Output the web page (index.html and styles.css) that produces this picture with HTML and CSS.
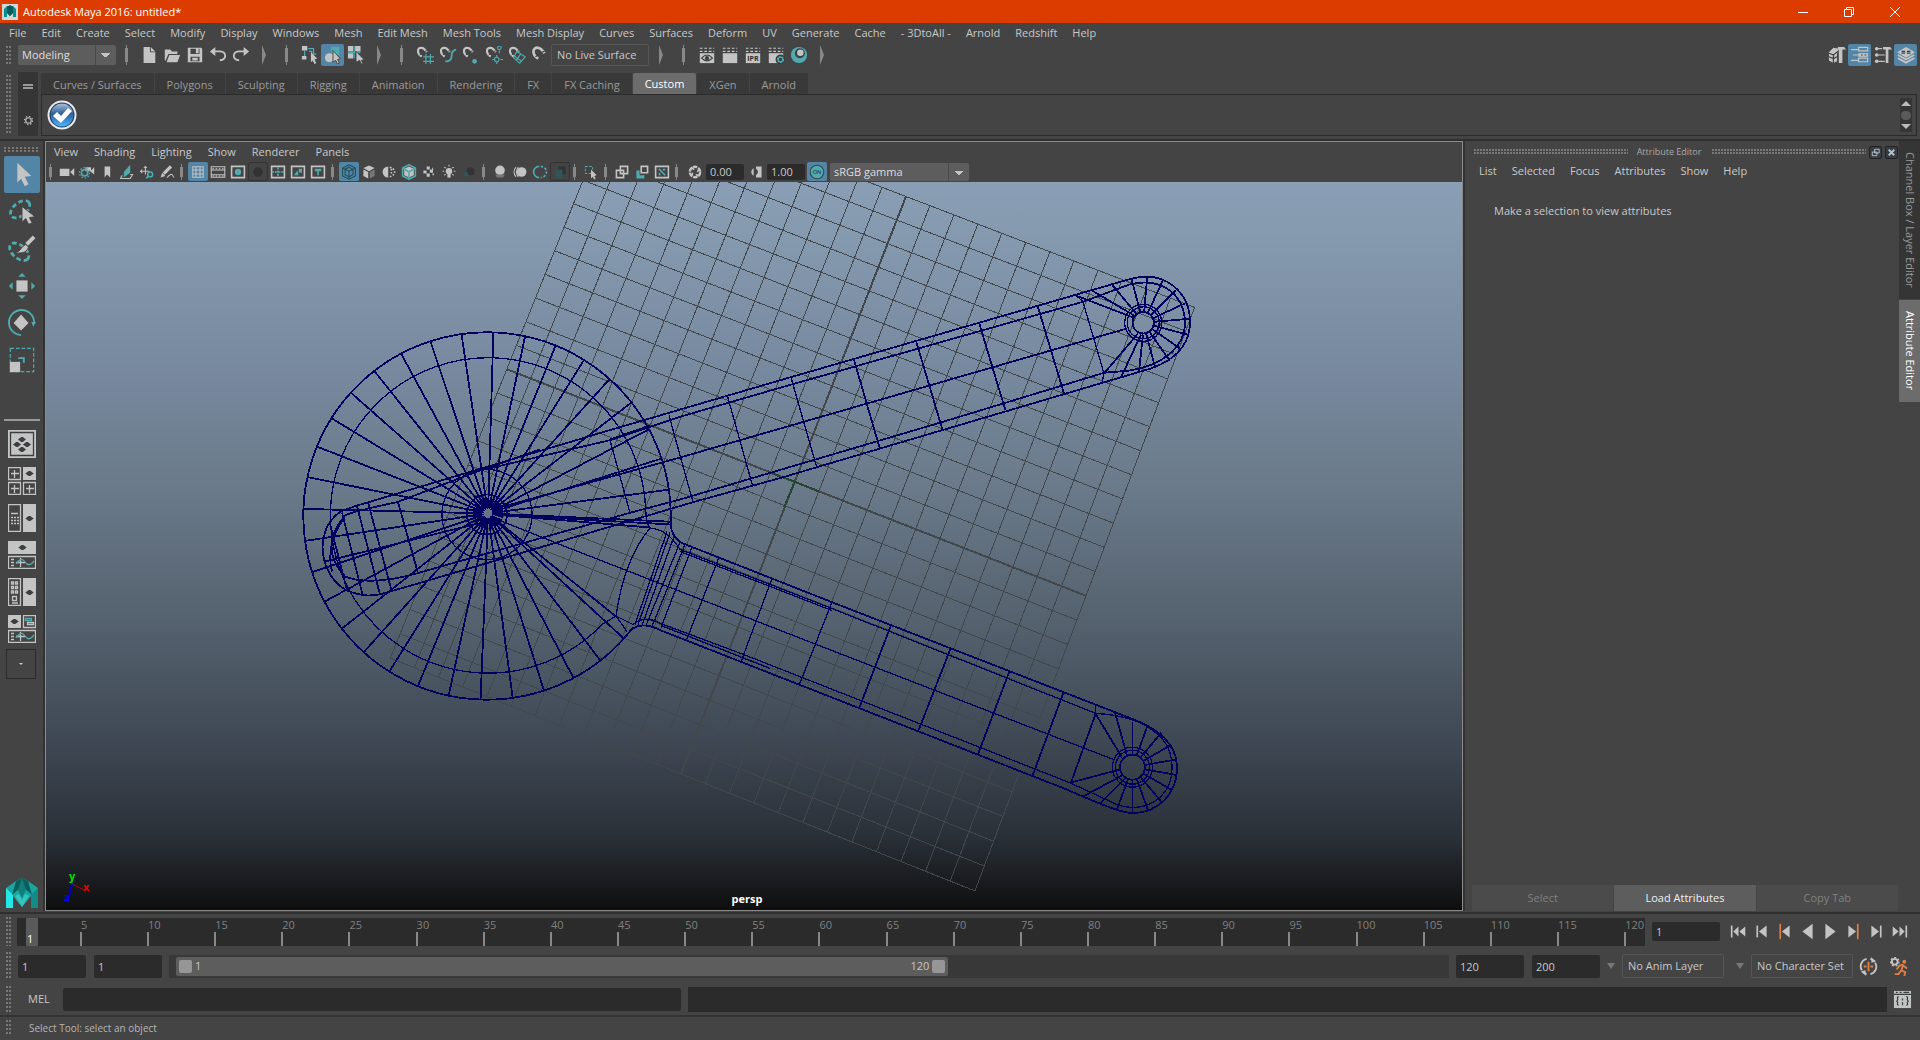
FILE: index.html
```html
<!DOCTYPE html>
<html lang="en">
<head>
<meta charset="utf-8">
<title>Autodesk Maya 2016: untitled*</title>
<link rel="stylesheet" href="styles.css">
</head>
<body>
<svg class="sprite" aria-hidden="true">
  <symbol id="file" viewBox="0 0 20 20"><path class="l" d="M4 1h7v6h6v12H4zM12 1l5 5h-5z"/></symbol>
  <symbol id="open" viewBox="0 0 20 20"><path class="l" d="M2 4h6l2 2h6v3H6l-3 7H2zM7 10h12l-3 8H4z"/></symbol>
  <symbol id="save" viewBox="0 0 20 20"><path class="l" fill-rule="evenodd" d="M2 2h15l1 1v15H2zM5 3v6h10V3zM5 12v5h10v-5zM11 3h3v5h-3zM7 13h6v3H7z"/></symbol>
  <symbol id="undo" viewBox="0 0 20 20"><path class="sl w2" d="M5 6h8q5 1 5 5t-6 5"/><path class="l" d="M7 1v10L1 6z"/></symbol>
  <symbol id="redo" viewBox="0 0 20 20"><path class="sl w2" d="M15 6H7q-5 1-5 5t6 5"/><path class="l" d="M13 1v10l6-5z"/></symbol>
  <symbol id="selhier" viewBox="0 0 20 20"><path class="l" d="M1 0h6v5H1zM1 11h5v4H1z"/><path class="st" d="M4 5v6M8 3h6v6h3M9 6h3v4"/><path class="l" d="M11 7l7 7-3 1 2 4-2 1-2-4-2 2z"/></symbol>
  <symbol id="selobj" viewBox="0 0 20 20"><path class="t" d="M8 1h9v9H8z"/><circle class="l" cx="6" cy="13" r="5"/><path class="l o" d="M10 5l8 9-3 1 2 4-2 1-2-4-3 2z"/></symbol>
  <symbol id="selcomp" viewBox="0 0 20 20"><path class="l" d="M1 0h6v6H1zM1 8h6v6H1zM9 0h6v6H9z"/><path class="st" d="M8 0v14M1 7h14"/><path class="l o" d="M10 6l9 9-3 1 2 4-2 0-2-4-4 2z"/></symbol>
  <symbol id="magnet" viewBox="0 0 20 20"><path class="sl w3" d="M8 14C0 9 2 1 8 2c3 0 5 3 7 6"/><path class="sb" d="M5 12l3-2M12 7l3-1"/></symbol>
  <symbol id="mgrid" viewBox="0 0 20 20"><use href="#magnet" width="16" height="17"/><path class="st" d="M11 9v11M16 9v11M8 12h12M8 17h12"/></symbol>
  <symbol id="mcurve" viewBox="0 0 20 20"><use href="#magnet" width="16" height="17"/><path class="st w2" d="M7 17q7 0 7-6t5-7"/></symbol>
  <symbol id="mpoint" viewBox="0 0 20 20"><use href="#magnet" width="16" height="17"/><circle class="t" cx="14" cy="17" r="2.600"/></symbol>
  <symbol id="mproj" viewBox="0 0 20 20"><use href="#magnet" width="16" height="17"/><circle class="st" cx="13" cy="15" r="2.500"/><circle class="st" cx="16" cy="2" r="2"/><path class="st" d="M13 10v3M13 18v2M16 5v3M8 15h2M17 15h3"/></symbol>
  <symbol id="mplane" viewBox="0 0 20 20"><use href="#magnet" width="16" height="17"/><path class="st" d="M10 6l9 6-6 7-7-6zM14 9l-5 7M7 11l8 6"/></symbol>
  <symbol id="clap" viewBox="0 0 20 20"><path class="l" d="M2 8h16v11H2z"/><path class="sl" stroke-dasharray="3 2" d="M2 2.500h16M2 6h16"/></symbol>
  <symbol id="clapeye" viewBox="0 0 20 20"><use href="#clap"/><path class="sb" d="M4 13.500q6-7 12 0q-6 6-12 0z"/><circle class="k" cx="10" cy="13.500" r="2.300"/></symbol>
  <symbol id="clapgear" viewBox="0 0 20 20"><use href="#clap"/><circle class="k" cx="15" cy="15" r="5.500"/><circle class="st w2" cx="15" cy="15" r="3" stroke-dasharray="2 1"/><circle class="st" cx="15" cy="15" r="2.500"/></symbol>
  <symbol id="ball" viewBox="0 0 20 20"><circle class="t" cx="10" cy="10" r="9"/><circle class="k" cx="11" cy="8" r="5.500"/><circle class="l" cx="11.500" cy="7.500" r="3.600"/></symbol>
  <symbol id="gear" viewBox="0 0 20 20"><circle class="sl w2" cx="10" cy="10" r="5"/><circle class="sl w2" cx="10" cy="10" r="7.500" stroke-dasharray="2.500 3.390"/></symbol>
  <symbol id="cubeham" viewBox="0 0 20 20"><path class="l" d="M1 7l5-5 6 1-2 5v9l-4 2-5-3zM11 1h7l2 3h-4v15h-4V4h-1z"/><path class="sb" d="M1 8l5 2v9M6 10l5-4M1 12l5 2 4-2"/></symbol>
  <symbol id="attrs" viewBox="0 0 20 20"><path class="sl" d="M0 4h8M2 10h6M0 16h8M8.500 1.500h10v4h-10zM8.500 13.500h10v4h-10z"/><path class="l" d="M8 8h11v4H8z"/><path class="sb" d="M11 10h2M15 10h2"/></symbol>
  <symbol id="toolset" viewBox="0 0 20 20"><path class="sl" d="M2 3h7M2 10h10M2 17h10"/><circle class="l" cx="3" cy="3" r="2"/><circle class="l" cx="3" cy="10" r="2"/><circle class="l" cx="3" cy="17" r="2"/><path class="l" d="M10 1h8l2 3h-4v15h-3V4h-3z"/></symbol>
  <symbol id="layers" viewBox="0 0 20 20"><path class="sl w2" d="M1 10l9 5 9-5M1 13.500l9 5 9-5"/><path class="l" d="M10 1l10 6-10 6L0 7z"/><path class="sb" d="M5 6h4M11 6h4M5 8h4M11 8h4"/></symbol>
  <symbol id="camera" viewBox="0 0 20 20"><path class="l" d="M1 6h12v9H1zM14 10l5-5v10z"/></symbol>
  <symbol id="camgear" viewBox="0 0 20 20"><path class="l" d="M8 4h7v4l4-4v9l-5-4H8z"/><circle class="st w2" cx="7" cy="11" r="4"/><circle class="st" cx="7" cy="11" r="6.500" stroke-dasharray="2 2"/></symbol>
  <symbol id="mark" viewBox="0 0 20 20"><path class="l" d="M7 3h7v14l-4-4-3 4z"/></symbol>
  <symbol id="plane" viewBox="0 0 20 20"><path class="t" d="M6 10l8-9v10l-8 6z"/><path class="sl" d="M4 14l-2 4h12l3-5h-3"/></symbol>
  <symbol id="pan" viewBox="0 0 20 20"><path class="sl" d="M8 3v10M2 9h11M6 5l2-2 2 2M4 7L2 9l2 2"/><circle class="st w2" cx="14" cy="13" r="3"/><path class="st w2" d="M12 15l-3 3"/></symbol>
  <symbol id="pencil" viewBox="0 0 20 20"><path class="sl w4" d="M6 12l9-9"/><path class="l" d="M2 17l2-6 4 4z"/><path class="sl" d="M10 17q6-6 7-3t2 3"/></symbol>
  <symbol id="grid" viewBox="0 0 20 20"><path class="sl" d="M3.500 3.500h13v13h-13zM7.500 3v14M12.500 3v14M3 7.500h14M3 12.500h14"/></symbol>
  <symbol id="film" viewBox="0 0 20 20"><path class="sl" d="M1.500 3.500h17v13h-17zM2 7.500h16M2 13.500h16"/><path class="sl" stroke-dasharray="2 2" d="M3 6h14M3 15h14"/></symbol>
  <symbol id="frame" viewBox="0 0 20 20"><path class="sl w2" d="M2 3h16v14H2z"/></symbol>
  <symbol id="rgate" viewBox="0 0 20 20"><use href="#frame"/><circle class="t" cx="10" cy="10" r="4"/></symbol>
  <symbol id="gmask" viewBox="0 0 20 20"><circle class="dk" cx="10" cy="10" r="6"/></symbol>
  <symbol id="fchart" viewBox="0 0 20 20"><use href="#frame"/><path class="st w2" stroke-dasharray="3 1" d="M2 10h16M10 4v12"/></symbol>
  <symbol id="saction" viewBox="0 0 20 20"><use href="#frame"/><path class="t" d="M5 14l4-6 2 6zM11 6h4v5h-4z"/></symbol>
  <symbol id="stitle" viewBox="0 0 20 20"><use href="#frame"/><path class="t" d="M6 6h8v3h-3v5H9V9H6z"/></symbol>
  <symbol id="wcube" viewBox="0 0 20 20"><path class="sd" d="M10 1l8 4v10l-8 4-8-4V5zM2 5l8 4 8-4M10 9v10M10 4l5 2.500v7L10 16l-5-2.500v-7z"/></symbol>
  <symbol id="cube" viewBox="0 0 20 20"><path class="l" d="M10 2l7 3-7 4-7-4zM3 7l6 3v8l-6-3z"/><path class="m" d="M11 10l6-3v8l-6 3z"/></symbol>
  <symbol id="halfb" viewBox="0 0 20 20"><path class="l" d="M9 3a7 7 0 0 0 0 14z"/><path class="sl w2" stroke-dasharray="2 2" d="M11 4q6 2 6 6t-6 6M13 6v8"/></symbol>
  <symbol id="texcube" viewBox="0 0 20 20"><path class="l" d="M10 3l6 3v8l-6 3-6-3V6z"/><path class="st w2" d="M10 1l8 4v10l-8 4-8-4V5zM3 6l7 4 7-4M10 10v9"/></symbol>
  <symbol id="check" viewBox="0 0 20 20"><circle class="k" cx="10" cy="10" r="7"/><path class="l" d="M7 3h4v4H7zM3 8h4v4H3zM11 7h4v4h-4zM7 12h4v4H7zM14 12h3l-2 3zM14 4l2 3h-2z"/></symbol>
  <symbol id="bulb" viewBox="0 0 20 20"><circle class="l" cx="10" cy="9" r="4"/><path class="l" d="M8 12h4v5H8z"/><path class="sl" d="M10 1v2M2 9h2M16 9h2M4 4l2 1M16 4l-2 1M4 14l2-1M16 14l-2-1"/></symbol>
  <symbol id="shad" viewBox="0 0 20 20"><circle class="dk" cx="12" cy="9" r="5"/><circle class="dt" cx="6" cy="13" r="3"/></symbol>
  <symbol id="ao" viewBox="0 0 20 20"><circle class="l" cx="10" cy="8" r="6"/><path class="m" d="M4 13h12l-2 4H6z"/></symbol>
  <symbol id="blur" viewBox="0 0 20 20"><circle class="l" cx="12" cy="10" r="6"/><path class="sl" d="M5 4q-5 6 0 12M8 4q-5 6 0 12"/></symbol>
  <symbol id="aa" viewBox="0 0 20 20"><path class="st w2" d="M9 3a7 7 0 0 0 0 14"/><path class="st w2" stroke-dasharray="3 2" d="M11 3a7 7 0 0 1 0 14"/></symbol>
  <symbol id="dof" viewBox="0 0 20 20"><path class="dk" d="M8 3h9v10H8z"/><path class="dt" d="M4 7h9v10H4z"/></symbol>
  <symbol id="iso" viewBox="0 0 20 20"><path class="st" stroke-dasharray="3 2" d="M3 3h9v9H3z"/><path class="l" d="M10 7l7 7-3 1 2 3-2 1-2-3-2 2z"/></symbol>
  <symbol id="xray" viewBox="0 0 20 20"><path class="sl w2" d="M8 3h9v9H8zM3 8h9v9H3z"/></symbol>
  <symbol id="xrayj" viewBox="0 0 20 20"><path class="st w4" d="M5 8v8h8"/><path class="sl w2" d="M9 3h8v8H9z"/></symbol>
  <symbol id="xrayb" viewBox="0 0 20 20"><use href="#frame"/><path class="st w2" d="M6 6l8 8M11 7h3M7 11v3"/></symbol>
  <symbol id="shutter" viewBox="0 0 20 20"><circle class="sl w3" cx="10" cy="10" r="6.500" stroke-dasharray="5.500 1.300"/><path class="sl w2" d="M5 4l4 3M15 6l-2 4M15 15l-4-2M6 15l1-4"/></symbol>
  <symbol id="gamma" viewBox="0 0 20 20"><path class="l" d="M7 5q-6 5 0 10zM10 3h7v14h-7v-3q5-4 0-8z"/></symbol>
  <symbol id="on" viewBox="0 0 20 20"><circle class="t" cx="10" cy="10" r="9"/><circle class="sb" cx="10" cy="10" r="8.500"/><text x="10" y="13" class="on">ON</text></symbol>
  <symbol id="lasso" viewBox="0 0 30 30"><ellipse class="st w3" stroke-dasharray="5 3" cx="13" cy="12" rx="12" ry="7" transform="rotate(-38 13 12)"/><path class="l o" d="M15 9l14 11-6 1 3 6-4 1-3-6-4 4z"/></symbol>
  <symbol id="brush" viewBox="0 0 30 30"><ellipse class="st w3" stroke-dasharray="5 3" cx="12" cy="18" rx="12" ry="7" transform="rotate(40 12 18)"/><path class="sl w4" d="M20 10l8-8"/><path class="l o" d="M7 19q6-1 8-6l4-3 3 3q-2 8-15 6z"/></symbol>
  <symbol id="move" viewBox="0 0 30 30"><path class="l" d="M9 9h12v12H9z"/><path class="t" d="M15 1l4 4h-8zM15 29l4-4h-8zM1 15l4-4v8zM29 15l-4-4v8z"/></symbol>
  <symbol id="rotate" viewBox="0 0 30 30"><path class="l" d="M14 6l8 9-8 8-8-8z"/><path class="st w2" d="M14 28A13.500 13.500 0 1 1 28 14"/><path class="t" d="M25 14h5l-3 5z"/></symbol>
  <symbol id="scale" viewBox="0 0 30 30"><path class="st" stroke-dasharray="4 2" d="M2.500 2.500h25v25h-25z"/><path class="l" d="M2 17h11v11H2z"/><path class="st w2" d="M11 13h6v5"/></symbol>
  <symbol id="dia" viewBox="0 0 10 6"><path class="k" d="M4 0h2L10 3 6 6H4L0 3z"/></symbol>
  <symbol id="lsingle" viewBox="0 0 28 28"><path class="l" d="M0 0h28v28H0z"/><path class="sb" d="M2.500 2.500h23v23h-23z"/><use href="#dia" x="10" y="7" width="8" height="5"/><use href="#dia" x="10" y="17" width="8" height="5"/><use href="#dia" x="5" y="12" width="8" height="5"/><use href="#dia" x="15" y="12" width="8" height="5"/></symbol>
  <symbol id="lfour" viewBox="0 0 28 28"><path class="sl" d="M.5.5h12v12H.5zM.5 15.500h12v12H.5zM15.500 15.500h12v12h-12zM3 6.500h8M6.500 3v8M3 21.500h8M6.500 18v8M18 21.500h8M21.500 18v8"/><path class="l" d="M15 0h13v13H15z"/><use href="#dia" x="17" y="4" width="9" height="5"/></symbol>
  <symbol id="lout" viewBox="0 0 28 28"><path class="sl" d="M.5.5h12v27H.5zM3 9.500h7"/><path class="sl" stroke-dasharray="2 1" d="M3 13.500h8M3 16.500h8M3 19.500h8"/><path class="l" d="M15 0h13v28H15z"/><use href="#dia" x="17" y="12" width="9" height="5"/></symbol>
  <symbol id="lgraph" viewBox="0 0 28 28"><path class="l" d="M0 0h28v13H0z"/><use href="#dia" x="10" y="4" width="9" height="5"/><path class="sl" d="M.5 15.500h27v12H.5zM3 18.500h3M3 21.500h3M3 24.500h3M8 21.500h9M12.500 17v9"/><path class="st" d="M8 23q5-8 9-2t9-1"/></symbol>
  <symbol id="lhyper" viewBox="0 0 28 28"><path class="sl" d="M.5.5h12v27H.5zM3.500 4h2v2h-2zM7.500 4h2v2h-2zM3.500 8.500h2v2h-2zM7.500 8.500h2v2h-2zM3.500 13h2v2h-2zM7.500 13h2v2h-2zM4.500 18.500h4v4h-4zM4 25h6"/><path class="l" d="M15 0h13v28H15z"/><use href="#dia" x="17" y="12" width="9" height="5"/></symbol>
  <symbol id="lmix" viewBox="0 0 28 28"><path class="l" d="M0 0h13v13H0z"/><use href="#dia" x="2" y="4" width="9" height="5"/><path class="sl" d="M15.500.5h12v12h-12zM19.500 7.500h6v2h-6zM.5 15.500h27v12H.5zM3 18.500h3M3 21.500h3M3 24.500h3M8 21.500h9M12.500 17v9"/><path class="st" d="M17.500 3.500h6v2h-6zM8 23q5-8 9-2t9-1"/></symbol>
  <symbol id="mlogo" viewBox="0 0 32 30"><path fill="#1aa7a2" d="M0 10L10 3l6-3 6 3 10 7v20h-7V18l-9 11-9-11v12H0z"/><path fill="#22e8e8" d="M0 10l7 7v13H0z"/><path fill="#128a86" d="M32 10l-7 7v13h7z"/><path fill="#0a5f5e" d="M16 0l-6 3L6 17l10-9 10 9-4-14z"/><path fill="#0f7f7c" d="M16 0l4 12-4 8-4-8z"/><path fill="#35c4be" d="M9 18l7 11 7-11-4-2-3 6-3-6z"/></symbol>
  <symbol id="loop" viewBox="0 0 20 20"><path class="sl w2" d="M8 2a8 8 0 0 0-5 12M12 18a8 8 0 0 0 5-12M12 2q3 1 5 3M8 18q-3-1-5-3"/><path class="l" d="M13 0v6l4-1zM7 20v-6l-4 1z"/><path class="so w2" d="M10 5v10M5 10h3M12 10h3"/></symbol>
  <symbol id="runner" viewBox="0 0 20 20"><circle class="sl w2" cx="5" cy="5" r="3"/><circle class="sl" cx="5" cy="5" r="4.500" stroke-dasharray="2 2"/><circle class="or" cx="15" cy="5" r="2"/><path class="so w2" d="M14 8l-4 1-3 4M14 8l-2 6 4 2-1 4M12 14l-3 4H5M14 9l4 3"/></symbol>
  <symbol id="script" viewBox="0 0 20 20"><path class="l" d="M1 1h18v18H1z"/><path class="sb" d="M1 4.500h18M3 2.500h2M7 2.500h2M11 2.500h6M6 7q-2 0-1 3l-1 2 1 1q-1 3 1 3M14 7q2 0 1 3l1 2-1 1q1 3-1 3M10 9v2M10 13v3"/></symbol>
  <symbol id="p1" viewBox="0 0 20 20"><path class="sl w2" d="M2 3v14"/><path class="l" d="M10 4v12l-6-6zM18 4v12l-7-6z"/></symbol>
  <symbol id="p2" viewBox="0 0 20 20"><path class="sl w2" d="M5 3v14"/><path class="l" d="M16 3v14l-9-7z"/></symbol>
  <symbol id="p3" viewBox="0 0 20 20"><path class="so w2" d="M5 1v18"/><path class="l" d="M16 3v14l-9-7z"/></symbol>
  <symbol id="p4" viewBox="0 0 20 20"><path class="l" d="M16 1v18L4 10z"/></symbol>
</svg>

<div class="app">
  <header class="title">
    <svg class="applogo" viewBox="0 0 16 16"><path fill="#cfd8d8" d="M0 0h16v16H0z"/><path fill="#0a8d8d" d="M2 5l3-3h6l3 3v8h-3V9l-3 3-3-3v4H2z"/><path fill="#06595c" d="M8 1l3 2v6l-3 3-3-3V3z"/></svg>
    <h1>Autodesk Maya 2016: untitled*</h1>
    <div class="winctl">
      <button aria-label="Minimize"><svg viewBox="0 0 10 10"><path d="M0 5.500h10"/></svg></button>
      <button aria-label="Restore"><svg viewBox="0 0 10 10"><path d="M.5 2.500h7v7h-7zM2.500 2V.5h7v7H8"/></svg></button>
      <button aria-label="Close"><svg viewBox="0 0 10 10"><path d="M0 0l10 10M10 0L0 10"/></svg></button>
    </div>
  </header>

  <nav class="menu main-menu">
    <button>File</button><button>Edit</button><button>Create</button><button>Select</button><button>Modify</button><button>Display</button><button>Windows</button><button>Mesh</button><button>Edit Mesh</button><button>Mesh Tools</button><button>Mesh Display</button><button>Curves</button><button>Surfaces</button><button>Deform</button><button>UV</button><button>Generate</button><button>Cache</button><button>- 3DtoAll -</button><button>Arnold</button><button>Redshift</button><button>Help</button>
  </nav>

  <div class="status">
    <i class="grip"></i>
    <select class="drop mode" aria-label="Menu set"><option>Modeling</option></select>
    <i class="bar first"></i>
    <button aria-label="New scene"><svg><use href="#file"/></svg></button>
    <button aria-label="Open scene"><svg><use href="#open"/></svg></button>
    <button aria-label="Save scene"><svg><use href="#save"/></svg></button>
    <button aria-label="Undo"><svg><use href="#undo"/></svg></button>
    <button aria-label="Redo"><svg><use href="#redo"/></svg></button>
    <i class="fold"></i><i class="bar"></i>
    <button aria-label="Select by hierarchy"><svg><use href="#selhier"/></svg></button>
    <button class="active" aria-label="Select by object"><svg><use href="#selobj"/></svg></button>
    <button aria-label="Select by component"><svg><use href="#selcomp"/></svg></button>
    <i class="fold"></i><i class="bar"></i>
    <button aria-label="Snap to grids"><svg><use href="#mgrid"/></svg></button>
    <button aria-label="Snap to curves"><svg><use href="#mcurve"/></svg></button>
    <button aria-label="Snap to points"><svg><use href="#mpoint"/></svg></button>
    <button aria-label="Snap to projected center"><svg><use href="#mproj"/></svg></button>
    <button aria-label="Snap to view planes"><svg><use href="#mplane"/></svg></button>
    <button aria-label="Make live"><svg><use href="#magnet"/></svg></button>
    <button class="boxed live">No Live Surface</button>
    <i class="fold"></i><i class="bar"></i>
    <button aria-label="Render view"><svg><use href="#clapeye"/></svg></button>
    <button aria-label="Render frame"><svg><use href="#clap"/></svg></button>
    <button class="ipr" aria-label="IPR render"><svg viewBox="0 0 20 20"><use href="#clap"/><text x="10" y="17">IPR</text></svg></button>
    <button aria-label="Render settings"><svg><use href="#clapgear"/></svg></button>
    <button aria-label="Hypershade"><svg><use href="#ball"/></svg></button>
    <i class="fold"></i>
    <span class="spring"></span>
    <button aria-label="Modeling toolkit"><svg><use href="#cubeham"/></svg></button>
    <button class="active" aria-label="Attribute editor"><svg><use href="#attrs"/></svg></button>
    <button aria-label="Tool settings"><svg><use href="#toolset"/></svg></button>
    <button class="active" aria-label="Channel box"><svg><use href="#layers"/></svg></button>
  </div>

  <section class="shelf">
    <i class="grip"></i>
    <div class="shelf-side"><i class="lines"></i><button aria-label="Shelf options"><svg><use href="#gear"/></svg></button></div>
    <div class="shelf-main">
      <div class="tabs">
        <button>Curves / Surfaces</button><button>Polygons</button><button>Sculpting</button><button>Rigging</button><button>Animation</button><button>Rendering</button><button>FX</button><button>FX Caching</button><button class="on-tab">Custom</button><button>XGen</button><button>Arnold</button>
      </div>
      <div class="shelf-body">
        <button class="orb" aria-label="Custom tool"><svg viewBox="0 0 30 30"><defs><linearGradient id="orb" x2="0" y2="1"><stop offset="0" stop-color="#a9bfd8"/><stop offset=".45" stop-color="#2c5f9c"/><stop offset="1" stop-color="#49b6ff"/></linearGradient></defs><circle cx="15" cy="15" r="14.500" fill="#e9eaec"/><circle cx="15" cy="15" r="12.500" fill="#1b3454"/><circle cx="15" cy="15" r="11.500" fill="url(#orb)"/><path fill="#fff" d="M6 16l4-4 4 4 7-8 4 3-11 12z"/></svg></button>
        <div class="shelf-scroll"><i class="up"></i><i class="knob"></i><i class="down"></i></div>
      </div>
    </div>
  </section>

  <main class="work">
    <aside class="toolbox">
      <i class="hgrip"></i>
      <button class="active" aria-label="Select"><svg viewBox="0 0 30 30"><path class="l" d="M10 2l15 14-7 1 4 8-4 2-4-8-4 4z"/></svg></button>
      <button aria-label="Lasso"><svg><use href="#lasso"/></svg></button>
      <button aria-label="Paint select"><svg><use href="#brush"/></svg></button>
      <button aria-label="Move"><svg><use href="#move"/></svg></button>
      <button aria-label="Rotate"><svg><use href="#rotate"/></svg></button>
      <button aria-label="Scale"><svg><use href="#scale"/></svg></button>
      <hr>
      <button aria-label="Single view"><svg><use href="#lsingle"/></svg></button>
      <button aria-label="Four view"><svg><use href="#lfour"/></svg></button>
      <button aria-label="Outliner view"><svg><use href="#lout"/></svg></button>
      <button aria-label="Graph view"><svg><use href="#lgraph"/></svg></button>
      <button aria-label="Hypergraph view"><svg><use href="#lhyper"/></svg></button>
      <button aria-label="Mixed view"><svg><use href="#lmix"/></svg></button>
      <button class="more" aria-label="More layouts"><i></i></button>
      <svg class="mlogo"><use href="#mlogo"/></svg>
    </aside>

    <section class="panel">
      <nav class="menu">
        <button>View</button><button>Shading</button><button>Lighting</button><button>Show</button><button>Renderer</button><button>Panels</button>
      </nav>
      <div class="ptools">
        <i class="bar"></i>
        <button aria-label="Select camera"><svg><use href="#camera"/></svg></button>
        <button aria-label="Camera attributes"><svg><use href="#camgear"/></svg></button>
        <button aria-label="Bookmarks"><svg><use href="#mark"/></svg></button>
        <button aria-label="Image plane"><svg><use href="#plane"/></svg></button>
        <button aria-label="Pan zoom"><svg><use href="#pan"/></svg></button>
        <button aria-label="Grease pencil"><svg><use href="#pencil"/></svg></button>
        <i class="bar"></i>
        <button class="active" aria-label="Grid"><svg><use href="#grid"/></svg></button>
        <button aria-label="Film gate"><svg><use href="#film"/></svg></button>
        <button aria-label="Resolution gate"><svg><use href="#rgate"/></svg></button>
        <button class="off" aria-label="Gate mask"><svg><use href="#gmask"/></svg></button>
        <button aria-label="Field chart"><svg><use href="#fchart"/></svg></button>
        <button aria-label="Safe action"><svg><use href="#saction"/></svg></button>
        <button aria-label="Safe title"><svg><use href="#stitle"/></svg></button>
        <i class="bar"></i>
        <button class="active" aria-label="Wireframe"><svg><use href="#wcube"/></svg></button>
        <button aria-label="Smooth shade"><svg><use href="#cube"/></svg></button>
        <button aria-label="Default material"><svg><use href="#halfb"/></svg></button>
        <button aria-label="Wireframe on shaded"><svg><use href="#texcube"/></svg></button>
        <button aria-label="Textured"><svg><use href="#check"/></svg></button>
        <button aria-label="Lights"><svg><use href="#bulb"/></svg></button>
        <button aria-label="Shadows"><svg><use href="#shad"/></svg></button>
        <i class="bar"></i>
        <button aria-label="Ambient occlusion"><svg><use href="#ao"/></svg></button>
        <button aria-label="Motion blur"><svg><use href="#blur"/></svg></button>
        <button aria-label="Anti-aliasing"><svg><use href="#aa"/></svg></button>
        <button class="off" aria-label="Depth of field"><svg><use href="#dof"/></svg></button>
        <i class="bar"></i>
        <button aria-label="Isolate select"><svg><use href="#iso"/></svg></button>
        <i class="bar"></i>
        <button aria-label="X-ray"><svg><use href="#xray"/></svg></button>
        <button aria-label="X-ray joints"><svg><use href="#xrayj"/></svg></button>
        <button aria-label="X-ray active"><svg><use href="#xrayb"/></svg></button>
        <i class="bar"></i>
        <button class="wide" aria-label="Exposure"><svg><use href="#shutter"/></svg></button>
        <input class="num" aria-label="Exposure value" value="0.00">
        <button class="wide" aria-label="Gamma"><svg><use href="#gamma"/></svg></button>
        <input class="num" aria-label="Gamma value" value="1.00">
        <button class="active onoff" aria-label="View transform"><svg><use href="#on"/></svg></button>
        <select class="drop gamma" aria-label="View transform name"><option>sRGB gamma</option></select>
      </div>
      <div class="view">
        <svg class="scene" viewBox="46 182 1416 729" preserveAspectRatio="xMidYMid slice">
          <g id="grid-lines" class="gl"></g>
          <g id="axis-lines" class="ga"></g>
          <path class="gg" d="M768 472.500L794.700 482.300 819 492M794.700 482.300L784 508"/>
          <g class="wire">
            <path class="h" d="M633 628A183.700 183.700 0 1 1 670.700 514V526Q672 538 682 543.500L832 602.700 1132 719.300C1155 728 1177 742 1177 768 1177 795 1157 814 1132 813.500 1124 813.500 1110 809 1065 789.300L661 631Q644 622 633 629"/>
            <path d="M645 500A157.700 157.700 0 1 0 602 625L616 616.500 633 625Q644 615 661 624L741 654 1070 783.300 1119 806C1150 814 1172 795 1172 768 1172 750 1165 738 1147 727 1140 722 1120 715 1096 714L832 609 680 550Q668 530 650 528.500 646 525 645 500M650 528.500Q624 560 616 616.500L627 632M490 517L560 545 814.600 644.300 1113.500 760"/>
            <path d="M680 552L832 611M661 626L770 669"/>
            <path d="M719 558L686 641.700M772 579L741 662.300M832 602.700L799 686"/>
            <path class="h" d="M891 625.700L859 709.300M950.600 649L918 732.300M1009.500 671.700L977.500 756M1063.400 693.300L1032 777.700M1095.400 705V715L1071 783.300"/>
            <path d="M692 547.700L661 628M685 545L652 627M680 543L646 626M674 537L642 626M670 533L638 625M667 532L635 625"/>
            <circle class="h" cx="487" cy="515" r="20"/><circle cx="487" cy="515" r="45"/><circle class="dense" cx="488" cy="514" r="10"/>
            <circle class="h" cx="1132.400" cy="767.700" r="12.500"/><circle cx="1132.400" cy="767.700" r="17"/><circle cx="1132.400" cy="767.700" r="20"/>
            <path class="h" d="M340 512.500Q355 506 368.500 502.700L488 467 613 429.700 780 380.800 1131 279.300C1165 270 1190 293 1190 322.500 1190 352 1165 366 1139.700 372.300L780 478.600 693 502.700 418 584 391.700 591.500C372 598 363 597 348 591.500 320 578 312 532 340 512.500"/>
            <path class="h" d="M1104 373.300L941.700 422.700 680 500 630 513.300 418 573.600Q370 587 345 577 318 548 345 516 352 512 397 502.700L480 471 610 440.700 680 417.300 780 388.300 1083 302.300 1129.400 285C1162 277 1184 295 1185 322.500 1185 350 1160 366 1130 371Z"/>
            <path class="h" d="M1127 329L680 458 500 508M478 524L325 562M610 440L650 426M480 471L540 450"/>
            <path class="h" d="M1037.400 305.700L1064 394M978.900 322.700L1005.400 410.700M915.900 341L942.400 430M853.900 360L879.700 448.700"/>
            <path d="M790.900 377.700L816.400 466.700M727.500 396.700L752.300 485.300M669 416L693 502.700M610 440.700L630 513.300M1083 302.300L1104 374 1102 383M1076 295.700L1083 302.300"/>
            <path class="h" d="M398 502.700L418 573.600M368 502.700L391.700 591.500M356.700 505.500L380 595M342 513L362.700 596M330 524L347 591M345 517Q325 545 332 572"/>
            <circle class="h" cx="1143.200" cy="323.300" r="10.700"/><circle cx="1143.200" cy="323.300" r="16"/><circle cx="1143.200" cy="323.300" r="18.500"/>
            <path id="spokes" class="h"></path>
            <path id="cap-spokes" class="h"></path>
          </g>
        </svg>
        <svg class="axis" viewBox="0 0 40 50"><path stroke="#c00" d="M12 26l12 6"/><path stroke="#00c" stroke-width="2" d="M12 26L8 43"/><path stroke="#0a0" d="M12 20v6"/><text x="9" y="22" fill="#0d0">y</text><text x="23" y="33" fill="#e00">x</text><text x="4" y="43" fill="#00e">z</text></svg>
        <span class="camname">persp</span>
      </div>
    </section>

    <section class="attr">
      <div class="dock"><i></i><h2>Attribute Editor</h2><i></i>
        <button aria-label="Float"><svg viewBox="0 0 12 12"><path d="M5 2.500h5v4H5zM2.500 5.500h5v4h-5z"/></svg></button>
        <button aria-label="Close panel"><svg viewBox="0 0 12 12"><path class="x" d="M3 3l6 6M9 3L3 9"/></svg></button></div>
      <nav class="menu">
        <button>List</button><button>Selected</button><button>Focus</button><button>Attributes</button><button>Show</button><button>Help</button>
      </nav>
      <p>Make a selection to view attributes</p>
      <div class="foot"><button disabled>Select</button><button class="go">Load Attributes</button><button disabled>Copy Tab</button></div>
    </section>
    <nav class="vtabs"><button>Channel Box / Layer Editor</button><button class="on-tab">Attribute Editor</button></nav>
  </main>

  <section class="time">
    <i class="grip"></i>
    <div class="frames" id="frames"><span class="now">1</span></div>
    <input class="num" aria-label="Current frame" value="1">
    <div class="play">
      <button aria-label="Go to start"><svg><use href="#p1"/></svg></button>
      <button aria-label="Step back frame"><svg><use href="#p2"/></svg></button>
      <button aria-label="Step back key"><svg><use href="#p3"/></svg></button>
      <button aria-label="Play backwards"><svg><use href="#p4"/></svg></button>
      <button class="flip" aria-label="Play forwards"><svg><use href="#p4"/></svg></button>
      <button class="flip" aria-label="Step forward key"><svg><use href="#p3"/></svg></button>
      <button class="flip" aria-label="Step forward frame"><svg><use href="#p2"/></svg></button>
      <button class="flip" aria-label="Go to end"><svg><use href="#p1"/></svg></button>
    </div>
  </section>

  <section class="range">
    <i class="grip"></i>
    <input class="num" aria-label="Animation start" value="1">
    <input class="num second" aria-label="Playback start" value="1">
    <div class="track"><div class="thumb"><i></i><span>1</span><span class="end">120</span><i></i></div></div>
    <input class="num" aria-label="Playback end" value="120">
    <input class="num second" aria-label="Animation end" value="200">
    <i class="tri"></i><button class="boxed set">No Anim Layer</button>
    <i class="tri"></i><button class="boxed set">No Character Set</button>
    <button class="ico" aria-label="Auto keyframe"><svg><use href="#loop"/></svg></button>
    <button class="ico" aria-label="Animation preferences"><svg><use href="#runner"/></svg></button>
  </section>

  <section class="cmd">
    <i class="grip"></i>
    <label for="mel">MEL</label>
    <input id="mel" class="in">
    <input class="out" aria-label="Command result" readonly>
    <button class="ico" aria-label="Script editor"><svg><use href="#script"/></svg></button>
  </section>

  <footer class="help"><i class="grip"></i><span>Select Tool: select an object</span></footer>
</div>
<script src="scene.js"></script>
</body>
</html>
```
FILE: styles.css
```css
* { box-sizing: border-box; }
body { margin: 0; background: #444; color: #c8c8c8; font: 11px/14px "Open Sans", "Noto Sans", sans-serif; }
button, input, select { font: inherit; color: inherit; background: none; border: 0; padding: 0; margin: 0; border-radius: 0; }
button { display: flex; align-items: center; justify-content: center; white-space: nowrap; }
h1, h2, p { margin: 0; font-weight: 400; font-size: inherit; }
svg { display: block; overflow: visible; }
.sprite { position: absolute; width: 0; height: 0; }

.l { fill: #c4c4c4; } .t { fill: #4fabaf; } .k { fill: #3a3f40; } .m { fill: #777; } .dk { fill: #333; } .dt { fill: #2f5556; } .or { fill: #e07f45; }
.sl, .st, .sb, .so, .sd { fill: none; stroke-width: 1.3px; }
.sl { stroke: #c4c4c4; } .st { stroke: #4fabaf; } .sb { stroke: #3a3f40; } .so { stroke: #e07f45; } .sd { stroke: #1f4f58; }
.w2 { stroke-width: 2px; } .w3 { stroke-width: 3px; } .w4 { stroke-width: 4px; }
.o { stroke: #444; stroke-width: 1px; }
.on { font-size: 7px; text-anchor: middle; fill: #223; }

.app { display: flex; flex-direction: column; min-height: 100vh; }
.title { display: flex; align-items: center; height: 23px; padding: 0 20px 0 2px; gap: 5px; background: #dc3c00; color: #fff; }
.title h1 { flex: 1; }
.applogo { width: 16px; height: 16px; }
.winctl { display: flex; gap: 36px; }
.winctl svg { width: 10px; height: 10px; fill: none; stroke: #fff; stroke-width: 1px; }

.menu { display: flex; gap: 15px; align-items: center; height: 20px; padding: 0 9px; }
.panel .menu { gap: 16px; padding: 0 8px; }

.grip { flex: none; width: 5px; align-self: stretch; margin: 3px 7px 3px 6px; background: radial-gradient(circle at 1px 1px, #777 1px, transparent 1px) 0 0 / 3px 4px; }
.bar { flex: none; width: 23px; height: 20px; background: linear-gradient(#888, #888) center / 1px 20px no-repeat, linear-gradient(#888, #888) center / 3px 14px no-repeat; }
.fold { flex: none; width: 23px; display: flex; justify-content: center; }
.fold::before { content: ""; border-left: 4px solid #888; border-top: 10px solid transparent; border-bottom: 10px solid transparent; }
.active { background: #5285a6; border-radius: 2px; }

.status { display: flex; align-items: center; height: 29px; padding-right: 3px; padding-bottom: 5px; }
.status .first { width: 21px; }
.status button { flex: none; width: 23px; height: 22px; }
.status button svg { width: 18px; height: 18px; }
.status .live { width: 98px; justify-content: flex-start; padding-left: 5px; }
.ipr text { font-size: 8px; font-weight: 700; text-anchor: middle; fill: #333; }
.spring { flex: 1; }
.boxed { border: 1px solid #555; border-radius: 2px; background: #444; white-space: nowrap; }
.drop { appearance: none; height: 20px; padding: 0 4px; border-radius: 2px; color: #ddd; background: linear-gradient(45deg, transparent 50%, #c4c4c4 50%) right 10px top 8px / 5px 5px no-repeat, linear-gradient(-45deg, transparent 50%, #c4c4c4 50%) right 5px top 8px / 5px 5px no-repeat, linear-gradient(#4a4a4a, #4a4a4a) right 20px top 0 / 1px 20px no-repeat, #5d5d5d; }
.drop.mode { width: 98px; }

.shelf { display: flex; height: 69px; padding: 0 3px 3px 0; border-bottom: 2px solid #2f2f2f; }
.shelf-side { width: 20px; margin-right: 3px; background: #353535; display: flex; flex-direction: column; align-items: center; justify-content: space-between; padding: 12px 0 10px; }
.shelf-side svg { width: 11px; height: 11px; }
.lines { width: 10px; height: 5px; border-top: 2px solid #999; border-bottom: 2px solid #999; }
.shelf-main { flex: 1; display: flex; flex-direction: column; min-width: 0; }
.tabs { display: flex; gap: 1px; height: 22px; padding-top: 1px; }
.tabs button { padding: 3px 12px 0; background: #393939; color: #999; border-radius: 2px 2px 0 0; }
.tabs .on-tab { background: #6c6c6c; color: #fff; padding-top: 1px; }
.shelf-body { flex: 1; display: flex; justify-content: space-between; align-items: center; border: 1px solid #2b2b2b; padding: 0 4px 0 5px; }
.orb svg { width: 30px; height: 30px; }
.shelf-scroll { width: 12px; height: 34px; background: #353535; display: flex; flex-direction: column; align-items: center; justify-content: space-between; padding: 3px 0; }
.up { border: 5px solid transparent; border-top: 0; border-bottom-color: #bbb; }
.down { border: 5px solid transparent; border-bottom: 0; border-top-color: #bbb; }
.knob { width: 10px; height: 9px; border-radius: 5px; background: #5a5a5a; }

.work { flex: 1; display: flex; min-height: 0; padding-bottom: 1px; border-bottom: 2px solid #2f2f2f; }
.toolbox { flex: none; width: 45px; display: flex; flex-direction: column; padding: 6px 5px 3px 4px; border-right: 2px solid #333; }
.hgrip { height: 6px; margin-bottom: 3px; background: radial-gradient(circle at 1px 1px, #777 1px, transparent 1px) 0 0 / 4px 3px; }
.toolbox button { width: 36px; height: 37px; }
.toolbox button svg { width: 28px; height: 28px; }
.toolbox hr { width: 36px; height: 2px; margin: 41px 0 4px; border: 0; background: #999; }
.toolbox .more { width: 30px; height: 30px; margin: 2px; border: 1px solid #2b2b2b; }
.more i { border: 2px solid transparent; border-bottom: 0; border-top-color: #ccc; }
.toolbox .mlogo { width: 32px; height: 30px; margin: auto 2px 0; }

.panel { flex: 1; min-width: 0; display: flex; flex-direction: column; border: 1px solid #8a8a8a; }
.ptools { display: flex; align-items: center; height: 20px; padding-bottom: 1px; }
.ptools button { flex: none; width: 20px; height: 19px; }
.ptools button svg { width: 16px; height: 16px; }
.ptools .bar { width: 11px; height: 16px; margin-left: -1px; margin-right: 1px; background-size: 1px 16px, 3px 10px; }
.ptools .wide { width: 23px; }
.off { border: 1px solid #333; border-radius: 2px; }
.num { background: #2b2b2b; border-radius: 2px; padding: 0 4px; }
.ptools .num { width: 38px; height: 16px; padding-left: 4px; }
.ptools .onoff { margin-left: 2px; }
.ptools .gamma { width: 139px; height: 18px; margin-left: 3px; }
.view { position: relative; flex: 1; min-height: 0; overflow: hidden; display: flex; background: linear-gradient(#8a9fb5, #788aa0 25%, #6a7a8a 42%, #55626f 60%, #414b57 75%, #2a3038 90%, #0e0e0e); }
.scene { position: absolute; inset: 0; width: 100%; height: 100%; shape-rendering: crispEdges; fill: none; }
.gl { stroke: #41474a; stroke-width: 1px; } .ga { stroke: #41474a; stroke-width: 2px; }
.gg { stroke: #24482f; stroke-width: 2px; }
.wire { stroke: #00005f; stroke-width: 1.300px; } .h { stroke-width: 1.800px; }
.dense { stroke-width: 11px; stroke-dasharray: 3 1; }
.axis { position: absolute; left: 14px; bottom: 2px; width: 40px; height: 50px; font-size: 11px; font-weight: 700; }
.camname { position: absolute; left: 0; right: 14px; bottom: 4px; text-align: center; color: #fff; font-weight: 700; }

.attr { flex: none; width: 436px; display: flex; flex-direction: column; border-left: 2px solid #333; padding: 2px 1px 0 7px; }
.dock { display: flex; align-items: center; gap: 3px; height: 18px; }
.dock h2 { font-size: 9px; margin: 0 6px; color: #aaa; }
.dock > i { flex: 1; height: 6px; margin-left: 2px; background: radial-gradient(circle at 1px 1px, #777 1px, transparent 1px) 0 0 / 3px 3px; }
.dock button { width: 13px; height: 13px; background: #383d42; border: 1px solid #222; border-radius: 2px; }
.dock svg { width: 11px; height: 11px; fill: none; stroke: #b5c4d0; stroke-width: 1px; }
.dock .x { stroke-width: 2px; }
.dock + .menu { padding: 0 7px; }
.attr p { padding: 23px 22px; }
.foot { margin-top: auto; display: flex; gap: 1px; }
.foot button { flex: 1; height: 26px; background: #4b4b4b; color: #808080; }
.foot .go { background: #5d5d5d; color: #eee; }
.vtabs { flex: none; width: 21px; display: flex; flex-direction: column; gap: 1px; }
.vtabs button { writing-mode: vertical-rl; width: 21px; height: 158px; background: #353535; color: #999; }
.vtabs .on-tab { height: 102px; background: #6c6c6c; color: #fff; }

.time { display: flex; align-items: center; height: 35px; padding-right: 9px; }
.time .grip { margin-right: 6px; }
.frames { flex: 1; display: flex; height: 28px; padding-left: 9px; background: #2b2b2b; color: #808080; position: relative; }
.frames .cell { flex: 50 0 0; min-width: 0; line-height: 14px; padding-left: 1px; background: linear-gradient(#888, #888) 0 100% / 2px 14px no-repeat; }
.frames .lead { flex-grow: 40; background-image: none; }
.frames .tail { flex-grow: 15; }
.now { position: absolute; left: 9px; top: 0; bottom: 0; width: 12px; display: flex; align-items: flex-end; padding-left: 1px; background: #5a5a5a; color: #fff; }
.time .num { width: 68px; height: 19px; margin: 0 7px 0 7px; }
.play { display: flex; }
.play button { width: 23px; height: 20px; }
.play svg { width: 17px; height: 17px; }
.flip { transform: scaleX(-1); }

.range { display: flex; align-items: center; height: 34px; padding-right: 5px; }
.range .num { width: 68px; height: 23px; }
.range .second { margin: 0 7px 0 8px; }
.track { flex: 1; height: 23px; margin-right: 7px; padding: 2px 7px; background: #383838; }
.thumb { width: 61%; height: 19px; display: flex; align-items: center; gap: 3px; padding: 0 3px; background: #5d5d5d; border-radius: 2px; }
.thumb i { width: 13px; height: 13px; border-radius: 2px; background: #969696; }
.end { margin-left: auto; }
.tri { margin-right: 7px; border: 4px solid transparent; border-bottom: 0; border-top: 6px solid #777; }
.set { width: 102px; height: 24px; margin-right: 12px; justify-content: flex-start; padding-left: 5px; }
.set:has(+ .ico) { margin-right: 0; }
.ico { width: 31px; }
.ico svg { width: 19px; height: 19px; }

.cmd { display: flex; align-items: center; height: 32px; padding-right: 2px; }
.cmd label { width: 45px; padding-left: 10px; }
.cmd .in { flex: 618 1 0; min-width: 0; height: 23px; background: #2b2b2b; border-radius: 2px; }
.cmd .out { flex: 1200 1 0; min-width: 0; height: 25px; margin-left: 7px; background: #2b2b2b; }
.help { display: flex; align-items: center; height: 25px; border-top: 2px solid #333; padding-bottom: 2px; font-size: 10px; color: #b5b5b5; }
.help span { padding-left: 11px; }
```
FILE: scene.js
```js
// Ground plane: a 24 x 24 grid seen through a slight perspective, u and v in -1..1.
function project(u, v) {
  const w = 1 - 0.006 * u - 0.0115 * v;
  return [(794.7 + 284.8 * u - 121.7 * v) / w, (482.3 + 110.4 * u + 283.1 * v) / w];
}
function line(a, b) {
  return "M" + a.map(n => n.toFixed(1)).join(" ") + "L" + b.map(n => n.toFixed(1)).join(" ");
}
function addPath(parentId, d) {
  const path = document.createElementNS("http://www.w3.org/2000/svg", "path");
  path.setAttribute("d", d);
  document.getElementById(parentId).appendChild(path);
}
let minor = "", axes = "";
for (let i = -12; i <= 12; i++) {
  const d = line(project(i / 12, -1), project(i / 12, 1)) + line(project(-1, i / 12), project(1, i / 12));
  if (i === 0) axes = d; else minor += d;
}
addPath("grid-lines", minor);
addPath("axis-lines", axes);

// Rays of the wheel, every ten degrees; three are cut short by the handle.
function ray(cx, cy, inner, ox, oy, outer, deg) {
  const a = deg * Math.PI / 180, s = Math.sin(a), c = -Math.cos(a);
  return line([cx + inner * s, cy + inner * c], [ox + outer * s, oy + outer * c]);
}
let rays = "";
for (let k = 0; k < 36; k++) {
  const deg = 2 + 10 * k;
  if (deg > 95 && deg < 130) continue;
  rays += ray(488, 514, 6, 487, 515.8, 183.7, deg);
}
rays += "M494 515L650 528M494 515L671 525M493 518L616 617";
document.getElementById("spokes").setAttribute("d", rays);

// Rays round the bolt holes at the far ends of both handles.
let caps = "";
for (let deg = -15; deg <= 165; deg += 20) caps += ray(1143.2, 323.3, 10.7, 1143.2, 323.3, 46, deg);
caps += "M1133 318L1076 296M1134 316L1092 291M1136 314L1112 285M1138 334L1104 374M1141 335L1121 378M1143 335L1139 372";
for (let deg = 0; deg <= 200; deg += 20) caps += ray(1132.4, 767.7, 12.5, 1132.4, 767.7, 45, deg);
caps += "M1127 756L1115 713M1122 758L1096 715M1120 770L1071 783M1122 776L1083 797M1125 779L1100 804";
document.getElementById("cap-spokes").setAttribute("d", caps);

// Time ruler: one labelled cell for every five frames.
const frames = document.getElementById("frames");
for (let f = 0; f <= 120; f += 5) {
  const cell = document.createElement("span");
  cell.className = "cell" + (f === 0 ? " lead" : f === 120 ? " tail" : "");
  if (f) cell.textContent = f;
  frames.appendChild(cell);
}
```
